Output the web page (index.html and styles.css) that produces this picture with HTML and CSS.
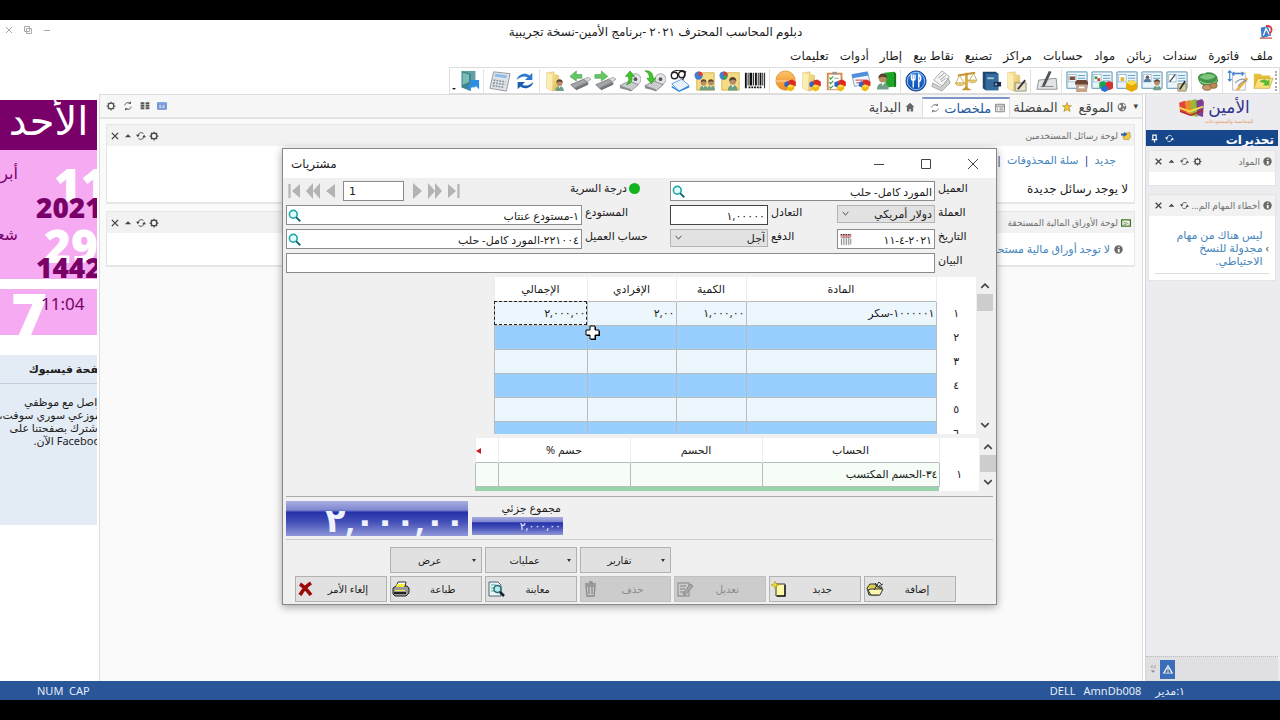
FILE: index.html
```html
<!DOCTYPE html>
<html lang="ar" dir="rtl">
<head>
<meta charset="utf-8">
<title>برنامج الأمين</title>
<link rel="stylesheet" href="styles.css">
</head>
<body>
<svg class="defs" aria-hidden="true">
  <defs>
    <linearGradient id="g-folder" x1="0" y1="0" x2="1" y2="1"><stop offset="0" stop-color="#fdf0ad"/><stop offset="1" stop-color="#e3b955"/></linearGradient>
    <linearGradient id="g-orange" x1="0" y1="0" x2="0" y2="1"><stop offset="0" stop-color="#fbc46a"/><stop offset="1" stop-color="#ee8a1c"/></linearGradient>
    <linearGradient id="g-blue" x1="0" y1="0" x2="0" y2="1"><stop offset="0" stop-color="#2f7fe0"/><stop offset="1" stop-color="#0b49a8"/></linearGradient>
  </defs>
  <symbol id="folder" viewBox="0 0 24 24"><path d="M3 3l8-1v3l5 1v15l-6 2-7-3z" fill="url(#g-folder)" stroke="#d8b766" stroke-width=".6"/><path d="M3 3l6 3v16l-6-2z" fill="#fbeeb4"/></symbol>
  <symbol id="person" viewBox="0 0 24 24"><path d="M4 23c0-6 3-9 8-9s8 3 8 9z" fill="#6d9f86"/><path d="M10 14l2 4 2-4z" fill="#fff"/><circle cx="12" cy="8" r="5.5" fill="#b98c65"/><path d="M6 8c0-5 3-7 6-7s6 2 6 7c-2-3-8-4-12 0z" fill="#57402f"/></symbol>
  <symbol id="cubes" viewBox="0 0 24 24"><path d="M2 8l5-3 5 3v6l-5 2-5-2z" fill="#2d64c8"/><path d="M9 4l7-2 6 4v7l-6 3-7-3z" fill="#d92d23"/><path d="M7 14l5-3 7 2v6l-6 4-6-3z" fill="#f0b90f"/><path d="M7 14l5-3 7 2-6 3z" fill="#ffe04a"/></symbol>
  <symbol id="card" viewBox="0 0 24 24"><rect x="1" y="2" width="22" height="18" rx="1" fill="#eaf5fb" stroke="#7ea9c1" stroke-width="1.4"/><rect x="3" y="5" width="8" height="8" fill="#fff" stroke="#8eb0c2" stroke-width=".8"/><path d="M13 6h8M13 9h8M13 12h8" stroke="#6aa3c5" stroke-width="1.2"/></symbol>
  <symbol id="disk" viewBox="0 0 24 24"><circle cx="18" cy="10" r="6" fill="#e4e4e8" stroke="#8c8c92" stroke-width=".8"/><circle cx="18" cy="10" r="2" fill="#555"/><path d="M1 17l10-5 10 4-8 7z" fill="#c9cbcf" stroke="#77797d" stroke-width=".8"/><path d="M1 17v3l12 3v-2z" fill="#8a8c91"/></symbol>
  <symbol id="usb" viewBox="0 0 24 24"><path d="M2 16l14-6 4 3-14 7z" fill="#a4a6aa" stroke="#66686c" stroke-width=".8"/><path d="M6 20l15-7v3l-13 6z" fill="#73757a"/><path d="M16 10l5-2 3 2-4 3z" fill="#ddd" stroke="#777" stroke-width=".6"/></symbol>

  <symbol id="t-open" viewBox="0 0 24 24"><path d="M2 4h7l2 2h9v13H2z" fill="#e7bf3f"/><path d="M2 20l4-11h17l-4 11z" fill="#fbe17a" stroke="#c99a26" stroke-width=".7"/><path d="M8 13c4-4 7-3 9-1l2-2v7h-7l2-2c-2-2-4-2-6-2z" fill="#58b93a"/></symbol>
  <symbol id="t-ruler" viewBox="0 0 24 24"><path d="M6 3h14v19H6z" fill="#fafafa" stroke="#bbb"/><path d="M3 1v11M1 3l2-2 2 2M1 10l2 2 2-2M6 4h12M8 2L6 4l2 2M16 2l2 2-2 2" stroke="#3d85d2" stroke-width="1.3" fill="none"/><path d="M10 21L21 8l2 2-11 13z" fill="#f0ae3b"/><path d="M9 14c5-5 9-5 12-2-3 0-7 3-9 6" fill="none" stroke="#8f9aa4" stroke-width="1.3"/></symbol>
  <symbol id="t-money" viewBox="0 0 24 24"><path d="M1 8c1-3 4-5 7-4 4-3 11-1 14 3l1 5c-1 4-5 6-9 6-6 1-12-2-13-10z" fill="#3f9448"/><path d="M3 8c4-4 12-5 17-1-4 4-12 5-17 1z" fill="#7fc47a"/><path d="M3 12c5 4 13 4 19 0" fill="none" stroke="#8fd08b" stroke-width="1.2"/><ellipse cx="11" cy="19" rx="5" ry="3" fill="#c79a6c" stroke="#8a623a"/><ellipse cx="18" cy="17" rx="4" ry="3" fill="#b98a5a" stroke="#8a623a"/></symbol>
  <symbol id="t-cardpen" viewBox="0 0 24 24"><use href="#card"/><path d="M4 13l6-8" stroke="#445" stroke-width="1.4"/><path d="M13 15h9v8h-9z" fill="#d6cda5" stroke="#8d8560"/><path d="M15 21l6-9" stroke="#2d2d2d" stroke-width="1.8"/></symbol>
  <symbol id="t-carduser" viewBox="0 0 24 24"><use href="#card"/><circle cx="7" cy="8" r="2" fill="#6b5a6b"/><path d="M3 13c0-5 8-5 8 0z" fill="#557b9e"/><use href="#person" x="11" y="8" width="13" height="16"/></symbol>
  <symbol id="t-cardbox" viewBox="0 0 24 24"><use href="#card"/><path d="M5 8h4v4H5z" fill="#e1b32e"/><path d="M11 14l6-3 6 3v7l-6 3-6-3z" fill="#e7a900"/><path d="M11 14l6-3 6 3-6 3z" fill="#ffdf48"/></symbol>
  <symbol id="t-cardcube" viewBox="0 0 24 24"><use href="#card"/><path d="M4 7h3v3H4z" fill="#2a9c4d"/><path d="M7 9h3v3H7z" fill="#d33"/><path d="M9 14l4-2 4 2v5l-4 2-4-2z" fill="#1ba54b"/><path d="M16 14l4-2 4 2v6l-4 2-4-2z" fill="#dc2f2f"/><path d="M11 19l4-2 4 2v3l-4 2-4-2z" fill="#2c6ed4"/></symbol>
  <symbol id="t-cardcrate" viewBox="0 0 24 24"><use href="#card"/><path d="M4 7h6v4H4z" fill="#7a5240"/><path d="M10 13l2-2h10l2 2v3H10z" fill="#6d4636"/><path d="M11 16h12v8H11z" fill="#c4a48c"/><path d="M14 18h6v2h-6z" fill="#fff"/></symbol>
  <symbol id="t-pen" viewBox="0 0 24 24"><path d="M3 11l19-2 1 12H1z" fill="#e2e5e7" stroke="#8b8f92"/><path d="M5 18h14" stroke="#888"/><path d="M7 16L14 1l3 1-7 15-3 2z" fill="#4e5357"/></symbol>
  <symbol id="t-foldernote" viewBox="0 0 24 24"><use href="#folder"/><path d="M11 14h12v9H11z" fill="#e7e2cc" stroke="#938d74"/><path d="M14 21l8-10" stroke="#333" stroke-width="2"/></symbol>
  <symbol id="t-book" viewBox="0 0 24 24"><path d="M3 2h14l3 2v18H6l-3-2z" fill="#1c4770"/><path d="M6 4h14v18H6z" fill="#356b9c"/><path d="M8 8h7v2H8z" fill="#a7c6e1"/><path d="M15 13h8v5h-8z" fill="#17314d"/><circle cx="17.500" cy="15.500" r="1" fill="#dce"/></symbol>
  <symbol id="t-scale" viewBox="0 0 24 24"><path d="M11 3h3v17h-3z" fill="#d8a93f"/><path d="M3 6l19-3" stroke="#c3922b" stroke-width="2"/><path d="M7 22l5-4 6 4z" fill="#c59330"/><path d="M5 6L1 14M5 6l5 8M20 4l-4 7M20 4l4 7" stroke="#c8a85a" stroke-width="1"/><path d="M0 14h11c-1 4-10 4-11 0zM14 11h10c-1 4-9 4-10 0z" fill="#edcf78" stroke="#be9435" stroke-width=".7"/></symbol>
  <symbol id="t-paper" viewBox="0 0 24 24"><path d="M4 11L13 1l8 6-7 11z" fill="#f5f5f5" stroke="#a5a5a5"/><path d="M9 9l6-5M11 11l6-5M12 13l5-4" stroke="#999"/><path d="M3 14l9 5 8-10 2 5-9 9-11-5z" fill="#cfcfcf" stroke="#8f8f8f" stroke-width=".7"/></symbol>
  <symbol id="t-rest" viewBox="0 0 24 24"><circle cx="12" cy="12" r="11" fill="url(#g-blue)" stroke="#0b3b86"/><circle cx="12" cy="12" r="9.500" fill="none" stroke="#a8cdf7"/><path d="M7 5v4c0 3 4 3 4 0V5M9 5v14M15 19V5c3 2 3 6 0 8" fill="none" stroke="#fff" stroke-width="1.500"/></symbol>
  <symbol id="t-usergreen" viewBox="0 0 24 24"><path d="M10 3l11-1 2 2v14l-11 1z" fill="#20a52b"/><path d="M21 2l2 2v14l-2 1z" fill="#13731b"/><use href="#person" x="-1" y="1" width="19" height="23"/></symbol>
  <symbol id="t-cal" viewBox="0 0 24 24"><path d="M2 5l17-3 3 12-17 4z" fill="#f3f8fd" stroke="#7b9cc0"/><path d="M2 5l17-3 1 4L3 9z" fill="#4b8fdd"/><path d="M6 11h11M7 14h10" stroke="#d66" stroke-width="1.500"/><use href="#cubes" x="8" y="9" width="16" height="15"/></symbol>
  <symbol id="t-clip" viewBox="0 0 24 24"><path d="M2 3h17v19H2z" fill="#d9864c"/><path d="M4 5h13v16H4z" fill="#fff"/><path d="M8 2h5v3H8z" fill="#9a9a9a"/><path d="M5 8l1 2 3-3M5 13l1 2 3-3M5 18l1 2 3-3" fill="none" stroke="#40a440" stroke-width="1.300"/><path d="M10 9h5M10 14h5" stroke="#999"/><use href="#cubes" x="9" y="9" width="15" height="15"/></symbol>
  <symbol id="t-foldercube" viewBox="0 0 24 24"><use href="#folder"/><use href="#cubes" x="9" y="9" width="15" height="15"/></symbol>
  <symbol id="t-pie" viewBox="0 0 24 24"><circle cx="11.500" cy="11.500" r="10.500" fill="url(#g-orange)" stroke="#d98a2c" stroke-width=".8"/><path d="M1 12h20" stroke="#fde0ae"/><use href="#cubes" x="9" y="9" width="15" height="15"/></symbol>
  <symbol id="t-barcode" viewBox="0 0 24 24"><path d="M1 3h22v18H1z" fill="#fff"/><path d="M1 3h2v17H1zM4 3h1v14H4zM6 3h3v14H6zM10 3h1v14h-1zM12 3h2v14h-2zM15 3h1v14h-1zM17 3h2v14h-2zM20 3h1v14h-1zM22 3h1v17h-1z" fill="#111"/><path d="M5 19h14" stroke="#111" stroke-width="2" stroke-dasharray="2 1"/></symbol>
  <symbol id="t-userpie" viewBox="0 0 24 24"><path d="M3 3h19v19H3z" fill="#f4dc86" stroke="#d4b34e"/><circle cx="5" cy="6" r="4.500" fill="#3f7fd0"/><path d="M5 6V1.500A4.500 4.500 0 0 1 9.500 6z" fill="#e33"/><path d="M5 6h4.500A4.500 4.500 0 0 1 5 10.500z" fill="#3aa83f"/><use href="#person" x="7" y="6" width="16" height="18"/></symbol>
  <symbol id="t-users" viewBox="0 0 24 24"><path d="M3 3h19v19H3z" fill="#f4dc86" stroke="#d4b34e"/><circle cx="5" cy="6" r="4.500" fill="#3f7fd0"/><path d="M5 6V1.500A4.500 4.500 0 0 1 9.500 6z" fill="#e33"/><use href="#person" x="4" y="8" width="13" height="16"/><use href="#person" x="12" y="8" width="13" height="16"/></symbol>
  <symbol id="t-glasses" viewBox="0 0 24 24"><path d="M3 15l11-5 8 7-11 6z" fill="#e9f2fb" stroke="#5a9bdd"/><path d="M3 17l8 6 11-6v2l-11 5-8-5z" fill="#2d80d6"/><circle cx="6" cy="6" r="3.500" fill="none" stroke="#222" stroke-width="1.500"/><circle cx="14" cy="5" r="3.500" fill="none" stroke="#222" stroke-width="1.500"/><path d="M3 3c4-4 12-3 15-1l-3 9" fill="none" stroke="#222" stroke-width="1.300"/></symbol>
  <symbol id="t-cddown" viewBox="0 0 24 24"><use href="#disk"/><path d="M1 1c5-1 9 2 9 8h3l-5 6-5-6h3c0-3-1-6-5-8z" fill="#3fc42b" stroke="#258a17" stroke-width=".6"/></symbol>
  <symbol id="t-cdup" viewBox="0 0 24 24"><use href="#disk"/><path d="M8 16c3-3 3-6 2-9H7l5-6 5 6h-3c1 5-1 8-6 9z" fill="#3fc42b" stroke="#258a17" stroke-width=".6"/></symbol>
  <symbol id="t-usbout" viewBox="0 0 24 24"><use href="#usb"/><path d="M1 5h7V1l7 6-7 5V9H1z" fill="#66c765" stroke="#3b9a3a" stroke-width=".6"/></symbol>
  <symbol id="t-usbin" viewBox="0 0 24 24"><use href="#usb"/><path d="M14 5H8V1L1 7l7 5V9h6z" fill="#66c765" stroke="#3b9a3a" stroke-width=".6"/></symbol>
  <symbol id="t-folderuser" viewBox="0 0 24 24"><use href="#folder"/><use href="#person" x="10" y="9" width="14" height="15"/></symbol>
  <symbol id="t-refresh" viewBox="0 0 24 24"><path d="M3 11c1-6 9-9 14-5l3-3v8h-8l3-3c-4-2-8-1-12 3z" fill="#2e78cf"/><path d="M21 13c-1 6-9 9-14 5l-3 3v-8h8l-3 3c4 2 8 1 12-3z" fill="#1a5cb4"/></symbol>
  <symbol id="t-calc" viewBox="0 0 24 24"><path d="M5 2l18 2-4 19L1 20z" fill="#dfe3e8" stroke="#8d949c"/><path d="M7 4l13 2-1 3L6 7z" fill="#8cbbe9"/><path d="M5 11l13 2M4.500 14l13 2M4 17l12.500 2" stroke="#8b929b" stroke-width="1.800" stroke-dasharray="2 1.200"/></symbol>
  <symbol id="t-exit" viewBox="0 0 24 24"><path d="M4 1h15v18H4z" fill="#62a0a6"/><path d="M4 1l10 3v19L4 19z" fill="#3f858f"/><path d="M5 3l7 2v8l-7 3z" fill="#79bdb5"/><path d="M11 23c-1-5 1-8 4-8l-2-4h10v10l-3-3c-3-1-6 1-9 5z" fill="#2a8ee4"/></symbol>

  <symbol id="gear" viewBox="0 0 16 16"><circle cx="8" cy="8" r="4.500" fill="none" stroke="currentColor" stroke-width="2"/><path d="M8 1v3M8 12v3M1 8h3M12 8h3M3 3l2 2M11 11l2 2M13 3l-2 2M5 11l-2 2" stroke="currentColor" stroke-width="2"/></symbol>
  <symbol id="sync" viewBox="0 0 16 16"><path d="M3 7a5.500 5.500 0 0 1 9-3M13 9a5.500 5.500 0 0 1-9 3" fill="none" stroke="currentColor" stroke-width="1.400"/><path d="M0 6h6L3 10zM10 10h6l-3-4z" fill="currentColor"/></symbol>
  <symbol id="reload" viewBox="0 0 16 16"><path d="M3 7c0-4 6-6 9-3V1M13 9c0 4-6 6-9 3v3M12 4H9M4 12h3" fill="none" stroke="currentColor" stroke-width="1.500"/></symbol>
  <symbol id="up" viewBox="0 0 16 16"><path d="M3 10l5-5 5 5z" fill="currentColor"/></symbol>
  <symbol id="cross" viewBox="0 0 16 16"><path d="M3 3l10 10M13 3L3 13" stroke="currentColor" stroke-width="2.200"/></symbol>
  <symbol id="info" viewBox="0 0 16 16"><circle cx="8" cy="8" r="7.500" fill="#686868"/><path d="M7 3h3v2H7zM6 7h4v5h1v1H6v-1h1V8H6z" fill="#fff"/></symbol>
  <symbol id="chev" viewBox="0 0 16 16"><path d="M3 5l5 6 5-6" fill="none" stroke="currentColor" stroke-width="1.600"/></symbol>
  <symbol id="chev-bold" viewBox="0 0 16 16"><path d="M2 5l6 6 6-6" fill="none" stroke="currentColor" stroke-width="2.600"/></symbol>
  <symbol id="mag" viewBox="0 0 16 16"><circle cx="6.500" cy="6.500" r="4.800" fill="#e8ffff" stroke="#1fa9ae" stroke-width="2"/><path d="M10 10l5 5" stroke="#14676f" stroke-width="2.400"/></symbol>
</svg>

<div class="app">
  <header class="titlebar">
    <svg class="app-icon" viewBox="0 0 16 16"><path d="M2 3l8-2 4 11-11 3z" fill="#3d7ccc"/><path d="M5 12l3-8 4 7" fill="none" stroke="#fff" stroke-width="1.500"/><path d="M8 1c7-1 8 6 4 9" fill="none" stroke="#d8353c" stroke-width="2"/><path d="M1 15h14" stroke="#d6564b" stroke-width="1.500"/></svg>
    <h1>دبلوم المحاسب المحترف ٢٠٢١ -برنامج الأمين-نسخة تجريبية</h1>
    <div class="win-ctl">
      <button aria-label="تصغير"><svg viewBox="0 0 10 10"><path d="M2 5.500h6" stroke="currentColor"/></svg></button>
      <button aria-label="استعادة"><svg viewBox="0 0 10 10"><path d="M1.500 1.500h5v5h-5zM3.500 3.500h5v5h-5z" fill="none" stroke="currentColor"/></svg></button>
      <button aria-label="إغلاق"><svg viewBox="0 0 10 10"><path d="M2 2l6 6M8 2l-6 6" stroke="currentColor"/></svg></button>
    </div>
  </header>
  <nav class="menu">
    <a href="#">ملف</a><a href="#">فاتورة</a><a href="#">سندات</a><a href="#">زبائن</a><a href="#">مواد</a><a href="#">حسابات</a><a href="#">مراكز</a><a href="#">تصنيع</a><a href="#">نقاط بيع</a><a href="#">إطار</a><a href="#">أدوات</a><a href="#">تعليمات</a>
  </nav>
  <div class="toolbar">
    <span class="grip"></span>
    <button><svg><use href="#t-open"/></svg></button><button><svg><use href="#t-ruler"/></svg></button><i></i>
    <button><svg><use href="#t-money"/></svg></button><i></i>
    <button><svg><use href="#t-cardpen"/></svg></button><button><svg><use href="#t-carduser"/></svg></button><button><svg><use href="#t-cardbox"/></svg></button><button><svg><use href="#t-cardcube"/></svg></button><button><svg><use href="#t-cardcrate"/></svg></button><i></i>
    <button><svg><use href="#t-pen"/></svg></button><i></i>
    <button><svg><use href="#t-foldernote"/></svg></button><button><svg><use href="#t-book"/></svg></button><button><svg><use href="#t-scale"/></svg></button><button><svg><use href="#t-paper"/></svg></button><button><svg><use href="#t-rest"/></svg></button><i></i>
    <button><svg><use href="#t-usergreen"/></svg></button><button><svg><use href="#t-cal"/></svg></button><button><svg><use href="#t-clip"/></svg></button><button><svg><use href="#t-foldercube"/></svg></button><button><svg><use href="#t-pie"/></svg></button><i></i>
    <button><svg><use href="#t-barcode"/></svg></button><button><svg><use href="#t-userpie"/></svg></button><button><svg><use href="#t-users"/></svg></button><button><svg><use href="#t-glasses"/></svg></button><button><svg><use href="#t-cddown"/></svg></button><button><svg><use href="#t-cdup"/></svg></button><button><svg><use href="#t-usbout"/></svg></button><button><svg><use href="#t-usbin"/></svg></button><button><svg><use href="#t-folderuser"/></svg></button><i></i>
    <button><svg><use href="#t-refresh"/></svg></button><button><svg><use href="#t-calc"/></svg></button><i></i>
    <button><svg><use href="#t-exit"/></svg></button>
    <span class="more"></span>
  </div>

  <div class="work">
    <aside class="side">
      <div class="logo">
        <div class="logo-text"><b>الأمين</b><small>للمحاسبة والمستودعات</small></div>
        <svg viewBox="0 0 28 22"><path d="M1 5l6-2 3 3v11l-8-3z" fill="#e0473a"/><path d="M7 4l5-2 4 3v14l-7-3z" fill="#f08b2c"/><path d="M13 3l5-2 4 3-2 16-6-2z" fill="#94ba3a"/><path d="M19 3l6-2 2 3-1 16-6-2z" fill="#7c3f91"/><path d="M1 10l11 4 14-5" fill="none" stroke="#f7d84f" stroke-width="2"/><path d="M2 14l11 4 13-5" fill="none" stroke="#b4252a" stroke-width="1.500"/></svg>
      </div>
      <h2 class="alert-head"><span>تحذيرات</span><svg><use href="#sync"/></svg><svg viewBox="0 0 16 16"><path d="M5 2h6v8H5zM3 10h10M8 10v5" fill="none" stroke="currentColor" stroke-width="2"/></svg></h2>
      <section class="card">
        <header><svg><use href="#info"/></svg><span>المواد</span><div class="tools"><svg><use href="#gear"/></svg><svg><use href="#sync"/></svg><svg><use href="#up"/></svg><svg><use href="#cross"/></svg></div></header>
        <div class="blank-line"></div>
      </section>
      <section class="card tasks">
        <header><svg><use href="#info"/></svg><span>أخطاء المهام الم...</span><div class="tools"><svg><use href="#sync"/></svg><svg><use href="#up"/></svg><svg><use href="#cross"/></svg></div></header>
        <div class="task"><span class="angle">›</span><a href="#">ليس هناك من مهام مجدولة للنسخ الاحتياطي.</a></div>
      </section>
      <div class="side-foot">
        <button aria-label="تحذيرات"><svg viewBox="0 0 16 16"><path d="M8 2l7 12H1z" fill="#e5edf9"/><path d="M8 5l4 8H4z" fill="#47659c"/><path d="M8 6v4M8 11v2" stroke="#fff" stroke-width="1.500"/></svg></button>
        <svg class="dots" viewBox="0 0 8 12"><path d="M4 1L1 3l3 2M8 1L5 3l3 2" fill="none" stroke="#999"/><path d="M1 8h6l-3 3z" fill="#888"/></svg>
      </div>
    </aside>

    <main class="center">
      <div class="tabs">
        <span class="drop">▾</span>
        <a href="#"><svg viewBox="0 0 16 16"><circle cx="8" cy="8" r="7" fill="#777"/><path d="M3 4l4 1-1 4-3 1zM9 2l5 4-3 2zM9 10l3 1-3 3z" fill="#fff"/></svg>الموقع</a>
        <a href="#"><svg viewBox="0 0 16 16"><path d="M8 1l2 5h5l-4 3 2 6-5-3-5 3 2-6-4-3h5z" fill="#f5c72c" stroke="#a07c13"/></svg>المفضلة</a>
        <a href="#" class="on"><svg viewBox="0 0 16 16"><path d="M1 2h14v12H1zM1 5h14M3 8h2M7 8h6M3 11h2M7 11h6" fill="none" stroke="#777" stroke-width="1.500"/></svg>ملخصات<svg class="grey"><use href="#reload"/></svg></a>
        <a href="#"><svg viewBox="0 0 16 16"><path d="M8 1l7 7h-2v7H9v-4H7v4H3V8H1z" fill="#666"/></svg>البداية</a>
        <div class="tab-tools">
          <svg viewBox="0 0 18 16"><path d="M1 2h16v12H1z" fill="#84aef0" stroke="#3b66b5"/><path d="M3 5h12v7H3zM9 5v7M3 8h12" fill="#dfeaff" stroke="#3b66b5"/></svg>
          <svg viewBox="0 0 16 16"><path d="M1 2h6v3H1zM9 2h6v3H9zM1 6h6v3H1zM9 6h6v3H9zM1 10h6v3H1zM9 10h6v3H9z" fill="#555"/></svg>
          <svg><use href="#reload"/></svg>
          <svg><use href="#gear"/></svg>
        </div>
      </div>
      <section class="panel">
        <header><svg viewBox="0 0 16 16"><path d="M3 5l11-3 1 8-3 4-8-1z" fill="#f0cd43" stroke="#a98a24"/><path d="M0 4h5V1l5 4-5 4V7H0z" fill="#275fb2"/></svg><span>لوحة رسائل المستخدمين</span><div class="tools"><svg><use href="#gear"/></svg><svg><use href="#sync"/></svg><svg><use href="#up"/></svg><svg><use href="#cross"/></svg></div></header>
        <div class="body msgs">
          <p class="links"><a href="#">جديد</a><i>|</i><a href="#">سلة المحذوفات</a><i>|</i><a href="#">عرض الرسائل</a></p>
          <p>لا يوجد رسائل جديدة</p>
        </div>
      </section>
      <section class="panel">
        <header><svg viewBox="0 0 16 16"><path d="M1 3h14v10H1z" fill="#f4f8ec" stroke="#40751f" stroke-width="2"/><path d="M4 6l3 2 2-1 3 3M4 10h5" stroke="#444" fill="none"/></svg><span>لوحة الأوراق المالية المستحقة</span><div class="tools"><svg><use href="#gear"/></svg><svg><use href="#sync"/></svg><svg><use href="#up"/></svg><svg><use href="#cross"/></svg></div></header>
        <div class="body due"><svg><use href="#info"/></svg><a href="#">لا توجد أوراق مالية مستحقة</a></div>
      </section>
    </main>

    <aside class="today">
      <div class="day">الأحد</div>
      <div class="dates">
        <span class="month m1">أبريل</span><span class="big b1">11</span><span class="year y1">2021</span>
        <span class="month m2">شعبان</span><span class="big b2">29</span><span class="year y2">1442</span>
      </div>
      <div class="clock"><span class="seven">7</span><time>11:04</time></div>
      <section class="fb">
        <h2><span>صفحة فيسبوك</span></h2>
        <p>تواصل مع موظفي<br>وموزعي سوري سوفت،<br>واشترك بصفحتنا على<br>Facebook الآن.</p>
      </section>
    </aside>
  </div>

  <footer class="status"><span>١:مدير</span><span>AmnDb008</span><span>DELL</span><span class="keys" dir="ltr">NUM&nbsp; CAP</span></footer>

  <div class="dialog" role="dialog" aria-label="مشتريات">
    <header class="dlg-title">
      <div class="dlg-ctl">
        <button aria-label="إغلاق الفاتورة"><svg viewBox="0 0 12 12"><path d="M1 1l10 10M11 1L1 11" stroke="currentColor"/></svg></button>
        <button aria-label="تكبير"><svg viewBox="0 0 12 12"><path d="M1.500 1.500h9v9h-9z" fill="none" stroke="currentColor"/></svg></button>
        <button aria-label="تصغير الفاتورة"><svg viewBox="0 0 12 12"><path d="M1 6.500h10" stroke="currentColor"/></svg></button>
      </div>
      <h2>مشتريات</h2>
    </header>
    <form class="form">
      <label for="client">العميل</label>
      <div class="field w3"><input id="client" value="المورد كامل- حلب"><svg><use href="#mag"/></svg></div>
      <div class="nav-row">
        <span class="secret"><i class="dot"></i>درجة السرية</span>
        <div class="pager" dir="ltr">
          <button type="button" aria-label="الأول"><svg viewBox="0 0 14 16"><path d="M1 1v14M2 1v14" stroke="#a5a5a5"/><path d="M12 1v14L4 8z"/></svg></button>
          <button type="button" aria-label="رجوع سريع"><svg viewBox="0 0 14 16"><path d="M7 0v16L0 8zM14 0v16L7 8z"/></svg></button>
          <button type="button" aria-label="السابق"><svg viewBox="0 0 14 16"><path d="M11 1v14L2 8z"/></svg></button>
          <input aria-label="رقم الفاتورة" value="1">
          <button type="button" aria-label="التالي"><svg viewBox="0 0 14 16"><path d="M3 0v16l9-8z"/></svg></button>
          <button type="button" aria-label="تقدم سريع"><svg viewBox="0 0 14 16"><path d="M0 0v16l7-8zM7 0v16l7-8z"/></svg></button>
          <button type="button" aria-label="الأخير"><svg viewBox="0 0 14 16"><path d="M12 1v14M13 1v14" stroke="#a5a5a5"/><path d="M2 1v14l8-7z"/></svg></button>
        </div>
      </div>
      <label for="cur">العملة</label>
      <div class="field"><select id="cur"><option>دولار أمريكي</option></select><svg><use href="#chev"/></svg></div>
      <label for="rate">التعادل</label>
      <div class="field"><input id="rate" class="dark" value="١,٠٠٠٠٠"></div>
      <label for="store">المستودع</label>
      <div class="field"><input id="store" value="١-مستودع عنتاب"><svg><use href="#mag"/></svg></div>
      <label for="date">التاريخ</label>
      <div class="field"><input id="date" value="٢٠٢١-٤-١١"><svg viewBox="0 0 16 16"><path d="M2 2h13v12H2z" fill="#f3eff0"/><path d="M2 2h13v4H2z" fill="#d99"/><path d="M2 2h13" stroke="#534" stroke-width="1.500" stroke-dasharray="2 1"/><path d="M3 7v8M6 5v10M9 5v10M12 5v10M14.500 7v7" stroke="#777"/></svg></div>
      <label for="pay">الدفع</label>
      <div class="field"><select id="pay"><option>آجل</option></select><svg><use href="#chev"/></svg></div>
      <label for="acc">حساب العميل</label>
      <div class="field"><input id="acc" value="٢٢١٠٠٤-المورد كامل- حلب"><svg><use href="#mag"/></svg></div>
      <label for="note">البيان</label>
      <div class="field w5"><input id="note"></div>
    </form>

    <div class="grid items">
      <div class="scroll"><svg><use href="#chev-bold"/></svg><span></span><svg><use href="#chev-bold"/></svg></div>
      <div class="clip">
        <table>
          <colgroup><col class="c-no"><col class="c-item"><col class="c-qty"><col class="c-unit"><col class="c-sum"></colgroup>
          <thead><tr><th></th><th>المادة</th><th>الكمية</th><th>الإفرادي</th><th>الإجمالي</th></tr></thead>
          <tbody>
            <tr><th>١</th><td>١٠٠٠٠٠١-سكر</td><td>١,٠٠٠,٠٠</td><td>٢,٠٠</td><td class="focus">٢,٠٠٠,٠٠</td></tr>
            <tr><th>٢</th><td></td><td></td><td></td><td></td></tr>
            <tr><th>٣</th><td></td><td></td><td></td><td></td></tr>
            <tr><th>٤</th><td></td><td></td><td></td><td></td></tr>
            <tr><th>٥</th><td></td><td></td><td></td><td></td></tr>
            <tr><th>٦</th><td></td><td></td><td></td><td></td></tr>
          </tbody>
        </table>
      </div>
    </div>

    <div class="grid discounts">
      <div class="scroll"><svg><use href="#chev-bold"/></svg><span></span><svg><use href="#chev-bold"/></svg></div>
      <div class="clip">
        <table>
          <colgroup><col class="c-no"><col class="c-acc"><col class="c-disc"><col class="c-disc"><col class="c-arrow"></colgroup>
          <thead><tr><th></th><th>الحساب</th><th>الحسم</th><th>حسم %</th><th><span class="red-arrow"></span></th></tr></thead>
          <tbody>
            <tr><th>١</th><td>٣٤-الحسم المكتسب</td><td></td><td></td><td></td></tr>
            <tr><th></th><td></td><td></td><td></td><td></td></tr>
          </tbody>
        </table>
      </div>
    </div>

    <div class="totals">
      <div class="partial"><span>مجموع جزئي</span><output>٢,٠٠٠,٠٠</output></div>
      <output class="grand">٢,٠٠٠,٠٠</output>
    </div>

    <div class="actions">
      <button class="menu-btn first">تقارير</button><button class="menu-btn">عمليات</button><button class="menu-btn">عرض</button>
      <button class="row2">إضافة<svg viewBox="0 0 18 16"><path d="M1 7l3-4h5l2 3h5l-3 8H3z" fill="#d9d14a" stroke="#333"/><path d="M5 8h12l-3 6H5L2 9z" fill="#fbf7b0" stroke="#333"/><path d="M9 2l2 2 2-3 3 3M8 9l3-5 4 4M13 5l4-2" fill="none" stroke="#334"/></svg></button>
      <button>جديد<svg viewBox="0 0 18 16"><path d="M5 3h9v12H5z" fill="#fcf9a6" stroke="#333"/><path d="M14 4v11H6" fill="none" stroke="#222" stroke-width="1.500"/><path d="M4 0l1 3 3 1-3 1-1 3-1-3-3-1 3-1z" fill="#f4dd22" stroke="#a8930c" stroke-width=".5"/></svg></button>
      <button disabled>تعديل<svg viewBox="0 0 18 16"><path d="M2 2h11v13H2zM4 5h6M4 8h5M4 11h5" fill="none" stroke="#999" stroke-width="1.300"/><path d="M7 13l7-10 3 2-8 9z" fill="#aaa" stroke="#888"/></svg></button>
      <button disabled>حذف<svg viewBox="0 0 18 16"><path d="M4 5h9l-1 10H5zM3 3h11M7 1h3v2M7 6v7M10 6v7" fill="none" stroke="#888" stroke-width="1.300"/></svg></button>
      <button>معاينة<svg viewBox="0 0 18 16"><path d="M2 1h9l3 3v11H2z" fill="#e8f4f5" stroke="#567"/><path d="M4 4h5M4 7h5M4 10h4" stroke="#5a9"/><circle cx="10.500" cy="8" r="3.500" fill="#b9eef0" stroke="#246b73" stroke-width="1.500"/><path d="M13 11l4 4" stroke="#123" stroke-width="2.500"/></svg></button>
      <button>طباعة<svg viewBox="0 0 18 16"><path d="M6 1h8l-1 5H4z" fill="#fff" stroke="#333"/><path d="M1 7l3-2h11l2 2v5l-3 3H3l-2-2z" fill="#9a9a9a" stroke="#222"/><path d="M5 3h8l-1 3H4z" fill="#f2ef3d"/><path d="M3 9h10v1H3z" fill="#f2ef3d"/><path d="M2 12h12" stroke="#222" stroke-width="2"/></svg></button>
      <button>إلغاء الأمر<svg viewBox="0 0 18 16"><path d="M3 3c3 2 8 7 11 11M14 2C9 5 6 9 3 14" stroke="#9c0808" stroke-width="3.500" fill="none"/></svg></button>
    </div>
    <svg class="cursor" viewBox="0 0 16 16"><path d="M6 2h5v4h4v5h-4v4H6v-4H2V6h4z" fill="#000"/><path d="M5 1h5v4h4v5h-4v4H5v-4H1V5h4z" fill="#fff" stroke="#000"/></svg>
  </div>
</div>
</body>
</html>
```
FILE: styles.css
```css
* { box-sizing: border-box; }
html, body { margin: 0; }
body {
  min-height: 100vh;
  padding: 20px 0;
  display: flex;
  flex-direction: column;
  background: #000;
  color: #1c1c1c;
  font: 11px/14px "Noto Sans", "DejaVu Sans", sans-serif;
}
button, input, select { font: inherit; color: inherit; margin: 0; }
button { border: 0; padding: 0; background: none; }
h1, h2, p { margin: 0; font-weight: normal; }
a { color: inherit; text-decoration: none; }
svg { display: block; flex: none; }
.defs { position: absolute; width: 0; height: 0; }

.app { position: relative; flex: 1; display: flex; flex-direction: column; background: #fff; }

.titlebar { display: flex; align-items: center; height: 24px; padding: 0 7px 0 4px; }
.titlebar h1 { flex: 1; text-align: center; font-size: 12px; line-height: 20px; }
.app-icon { width: 14px; height: 14px; }
.win-ctl { display: flex; gap: 9px; color: #aaa; padding-bottom: 5px; }
.win-ctl svg { width: 10px; height: 10px; }

.menu { display: flex; gap: 11px; height: 23px; padding: 0 7px; font-size: 12px; line-height: 23px; }

.toolbar { display: flex; align-items: center; align-self: flex-start; height: 27px; padding: 0 2px; border: 1px solid #ddd; }
.toolbar button { width: 25px; display: grid; place-items: center; }
.toolbar svg { width: 22px; height: 22px; }
.toolbar i { width: 1px; height: 24px; margin: 0 2px; background: #e3e3e3; }
.toolbar i:nth-of-type(even) { margin-right: 3px; }
.grip { width: 2px; height: 20px; border-left: 2px dotted #aaa; }
.more { align-self: flex-end; margin: 0 0 3px; border: 2px solid transparent; border-top-color: #222; border-bottom: 0; }

.work { flex: 1; display: flex; gap: 2px; background: #fff; }

.side { width: 135px; display: flex; flex-direction: column; background: #ecebf0; border-left: 1px solid #d5d5da; padding-right: 2px; }
.logo { display: flex; justify-content: center; gap: 3px; height: 36px; padding: 4px 0 0 4px; }
.logo > svg { width: 27px; height: 21px; }
.logo-text { width: 42px; color: #33348c; display: flex; flex-direction: column; align-items: center; }
.logo-text b { font: 17px/19px "DejaVu Sans", sans-serif; }
.logo-text small { color: #e79a5c; font-size: 5px; line-height: 8px; white-space: nowrap; }
.alert-head { display: flex; align-items: center; gap: 6px; height: 16px; padding: 0 4px; overflow: hidden; background: #17478b; color: #fff; font-size: 12px; line-height: 20px; font-weight: bold; }
.alert-head span { flex: 1; padding-top: 4px; }
.alert-head svg { width: 9px; height: 9px; }
.card { margin: 4px 2px 4px; background: #fff; border: 1px solid #e4e4e7; }
.card header, .panel header { display: flex; align-items: center; gap: 3px; height: 21px; padding: 0 3px; background: #f2f2f2; color: #707070; font-size: 9px; }
.card header svg { width: 9px; height: 9px; }
.card header > span { white-space: nowrap; }
.tools { display: flex; gap: 4px; margin-right: auto; color: #444; padding-left: 2px; }
.card .tools svg { width: 9px; height: 9px; }
.blank-line { height: 13px; }
.tasks { margin-top: 4px; }
.task { display: flex; align-items: center; gap: 3px; margin: 0 6px 6px; padding: 12px 0 6px 10px; border-bottom: 1px solid #ddd; color: #4585bd; font-size: 11px; line-height: 13px; }
.angle { color: #555; }
.side-foot { display: flex; align-items: center; gap: 4px; height: 25px; margin-top: auto; padding-right: 103px; background: #e0e0e2; border-top: 1px dotted #bbb; }
.side-foot button { width: 15px; height: 19px; display: grid; place-items: center; background: #3c6db8; }
.side-foot button svg { width: 12px; height: 12px; }
.dots { width: 6px; height: 12px; }

.center { flex: 1; min-width: 0; background: #fafafa; border: 1px solid #ddd; border-width: 1px 1px 0; }
.tabs { display: flex; align-items: stretch; height: 24px; padding: 0 4px 0 6px; border-bottom: 2px solid #e3e3e3; background: #f7f7f7; font-size: 13px; color: #444; }
.tabs > a { display: flex; align-items: center; gap: 4px; padding: 2px 6px 0 1px; }
.tabs > a svg { width: 10px; height: 10px; }
.tabs .on { background: #fff; color: #24589f; padding: 0 4px 0 7px; margin: 2px 2px 0 1px; border: 1px solid #ddd; border-top: 2px solid #7d96c6; border-bottom: 0; }
.tabs .grey { color: #777; }
.drop { line-height: 22px; font-size: 9px; }
.tab-tools { display: flex; align-items: center; gap: 7px; margin-right: auto; color: #555; }
.tab-tools svg { width: 10px; height: 10px; }
.panel { margin: 5px 7px 7px 6px; background: #fff; border: 1px solid #e6e6e6; border-bottom-width: 2px; }
.panel header { padding-left: 1px; }
.panel header svg { width: 10px; height: 10px; }
.panel .tools { gap: 3px; }
.body { padding: 5px 6px 4px; }
.msgs p { font-size: 12px; line-height: 18px; }
.msgs .links { display: flex; gap: 5px; padding-right: 12px; margin-bottom: 11px; font-size: 11px; color: #4585bd; }
.links i { color: #2a2a88; font-style: normal; }
.due { display: flex; align-items: center; gap: 4px; padding: 9px 11px; color: #4585bd; font-size: 11px; }
.due svg { width: 9px; height: 9px; }

.today { width: 97px; overflow: hidden; background: #fff; padding-top: 6px; }
.day { height: 50px; overflow: hidden; background: #780068; color: #fff; text-align: center; font: 40px/42px "DejaVu Sans", sans-serif; }
.dates { position: relative; height: 129px; overflow: hidden; background: #f6aaf1; }
.dates span { position: absolute; }
.month { color: #780068; font-size: 16px; line-height: 24px; right: 79px; white-space: nowrap; }
.big { left: 54px; color: #fff; font: 900 46px/46px "Open Sans", sans-serif; }
.year { left: 36px; color: #780068; font: 900 28px/28px "Open Sans", sans-serif; }
.m1 { top: 11px; } .m2 { top: 72px; }
.b1 { top: 11px; } .b2 { top: 72px; left: 44px; }
.y1 { top: 43px; } .y2 { top: 103px; }
.clock { position: relative; height: 46px; margin: 10px 0 20px; overflow: hidden; background: #f6aaf1; }
.clock span { position: absolute; left: 11px; top: -5px; color: #fff; font: 900 62px/60px "Open Sans", sans-serif; }
.clock time { position: absolute; left: 41px; top: 3px; color: #780068; font-size: 17px; line-height: 24px; }
.fb { height: 170px; background: #e3ebf5; overflow: hidden; }
.fb h2 { height: 29px; padding-top: 6px; border-bottom: 1px solid #c3cddd; font-size: 11px; line-height: 15px; font-weight: bold; white-space: nowrap; }
.fb h2 span { display: block; margin-right: -12px; }
.fb p { margin: 11px -9px 0 0; white-space: nowrap; font-size: 11px; line-height: 13px; }

.status { display: flex; align-items: center; gap: 8px; height: 19px; padding: 0 95px 0 37px; background: #295599; color: #e5edf8; font-size: 11px; }
.status span:first-child { margin-left: 6px; }
.keys { margin-right: auto; }

.dialog { position: absolute; left: 282px; top: 128px; width: 715px; background: #f0f0f0; border: 1px solid #888; box-shadow: 0 2px 8px rgba(0, 0, 0, .35); font-size: 11px; }
.dlg-title { display: flex; align-items: center; justify-content: space-between; height: 29px; padding: 0 17px 0 8px; background: #fff; }
.dlg-title h2 { font-size: 12px; line-height: 20px; }
.dlg-ctl { display: flex; gap: 35px; color: #444; }
.dlg-ctl svg { width: 12px; height: 12px; }
.form { display: grid; grid-template-columns: 58px 98px 69px 98px 88px 1fr; row-gap: 4px; padding: 3px 3px 0; }
.form label { direction: ltr; text-align: left; padding-left: 3px; line-height: 14px; white-space: nowrap; }
.field { position: relative; height: 20px; }
.w3 { grid-column: span 3; }
.w5 { grid-column: span 5; }
.field input, .field select, .pager input { width: 100%; height: 20px; border: 1px solid #8b8b8b; border-radius: 0; background: #fff; padding: 0 2px; line-height: 16px; }
.field .dark { border-color: #444; }
.field select { appearance: none; background: #e2e2e2; border-color: #b4b4b4; height: 18px; }
.field svg { position: absolute; left: 2px; top: 4px; width: 13px; height: 13px; }
.field select + svg { left: 4px; top: 4px; width: 9px; height: 9px; color: #444; }
.nav-row { grid-column: span 2; display: flex; justify-content: space-between; padding-right: 30px; }
.secret { display: flex; gap: 2px; line-height: 14px; }
.dot { width: 11px; height: 11px; margin-top: 2px; border-radius: 50%; background: #12b41d; }
.pager { display: flex; align-items: center; gap: 4px; padding-left: 2px; }
.pager svg { width: 14px; height: 16px; fill: #b3b3b3; }
.pager input { width: 61px; padding: 0 5px; margin: 0 2px 0 1px; font: 11px/16px "DejaVu Sans", sans-serif; }

.grid { display: flex; }
.items { height: 157px; margin-top: 4px; padding-right: 3px; }
.discounts { height: 53px; margin-top: 4px; }
.clip { overflow: hidden; }
.scroll { width: 17px; display: flex; flex-direction: column; align-items: center; padding: 4px 0; }
.scroll svg { width: 10px; height: 10px; color: #444; }
.scroll svg:first-child { transform: rotate(180deg); }
.scroll span { width: 16px; height: 17px; background: #cdcdcd; margin: 3px 0 auto; }
table { border-collapse: collapse; table-layout: fixed; width: 482px; line-height: 14px; }
.discounts table { width: 504px; }
tr { height: 24px; }
th, td { padding: 0 1px; font-weight: normal; overflow: hidden; white-space: nowrap; }
thead th { background: #fff; border-left: 1px solid #ececec; }
tbody th { background: #fff; }
tbody td { border: 1px solid #b7bcbf; background: #ebf6fd; }
tbody tr:nth-child(even) td { background: #99cffe; }
.discounts tbody td { background: #f5fdf6; }
.discounts tbody tr:nth-child(even) td { background: #97d4a9; border: 0; }
.items .focus { outline: 1px dashed #222; outline-offset: -1px; }
.c-no { width: 40px; }
.c-item { width: 190px; }
.c-qty { width: 70px; }
.c-unit { width: 89px; }
.c-sum { width: 93px; }
.c-acc { width: 177px; }
.c-disc { width: 132px; }
.c-arrow { width: 23px; }
.discounts thead th:last-child { text-align: left; padding: 0; }
.red-arrow { display: inline-block; border: 3px solid transparent; border-right: 5px solid #d01822; border-left: 0; }

.totals { display: flex; gap: 4px; margin: 5px 3px 0; padding: 4px 430px 3px 0; border-top: 1px solid #aaa; border-bottom: 1px solid #ccc; }
.partial { width: 91px; }
.partial span { display: block; height: 16px; line-height: 14px; padding-right: 2px; }
.totals output { display: block; background: linear-gradient(#a9aee0, #7f86cf 26%, #2431a8 32%, #4450b8 60%, #8f97d8); color: #eef2ff; overflow: hidden; }
.partial output { height: 18px; line-height: 17px; padding: 0 2px; }
.grand { flex: 1; height: 35px; font-size: 33px; line-height: 38px; font-weight: bold; padding: 0 3px; }

.actions { display: grid; grid-template-columns: repeat(7, 1fr); gap: 3px; padding: 7px 40px 2px 12px; }
.actions button { position: relative; height: 26px; background: #e1e1e1; border: 1px solid #b2b2b2; font-size: 10px; padding-left: 14px; }
.actions button:disabled { background: #ccc; color: #8a8a8a; border-color: #c1c1c1; }
.actions svg { position: absolute; left: 1px; top: 4px; width: 18px; height: 16px; }
.actions .first { grid-column-start: 4; }
.actions .row2 { grid-column-start: 1; }
.actions .menu-btn { padding: 0 12px 0 0; }
.menu-btn::after { content: ""; position: absolute; right: 5px; top: 11px; border: 2px solid transparent; border-top: 3px solid #333; border-bottom: 0; }
.cursor { position: absolute; left: 302px; top: 176px; width: 16px; height: 16px; }
```
